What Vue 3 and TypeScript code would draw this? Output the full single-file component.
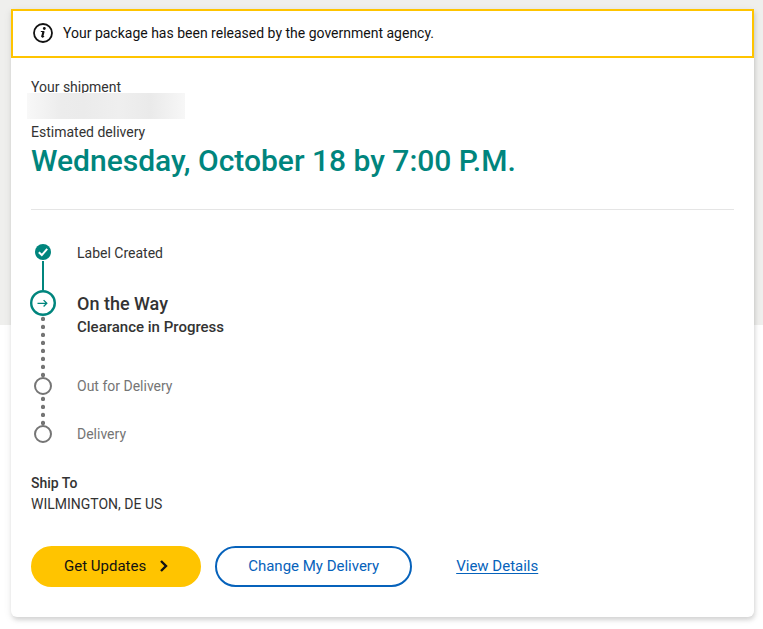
<script setup lang="ts">
type StepState = 'done' | 'current' | 'upcoming'

interface Step {
  label: string
  detail?: string
  state: StepState
}

const steps: Step[] = [
  { label: 'Label Created', state: 'done' },
  { label: 'On the Way', detail: 'Clearance in Progress', state: 'current' },
  { label: 'Out for Delivery', state: 'upcoming' },
  { label: 'Delivery', state: 'upcoming' },
]
</script>

<template>
  <main class="page">
    <article class="card">
      <div class="notice" role="status">
        <svg class="notice-icon" viewBox="0 0 20 20" aria-hidden="true">
          <circle cx="10" cy="10" r="9" fill="none" stroke="#121212" stroke-width="1.8" />
          <circle cx="11.3" cy="5.5" r="1.4" fill="#121212" />
          <path d="M7.8 8.5h2.7L9.2 13.6c-.1.8.8.6 1.9-.4" fill="none" stroke="#121212" stroke-width="1.1" />
          <path d="M10.6 8.2L9.1 14" fill="none" stroke="#121212" stroke-width="2.1" />
        </svg>
        <p>Your package has been released by the government agency.</p>
      </div>

      <div class="body">
        <header class="summary">
          <p>Your shipment</p>
          <div class="redacted"></div>
          <p>Estimated delivery</p>
          <h1>Wednesday, October 18 by 7:00 P.M.</h1>
        </header>

        <ol class="steps">
          <li v-for="step in steps" :key="step.label" class="step" :class="step.state">
            <div class="marker">
              <svg v-if="step.state === 'done'" width="16" height="16" viewBox="0 0 16 16" aria-hidden="true">
                <circle cx="8" cy="8" r="8" fill="#00857d" />
                <path d="M3.8 8.3l3 2.8 5.4-6.2" fill="none" stroke="#fff" stroke-width="2" />
              </svg>
              <svg v-else-if="step.state === 'current'" width="26" height="26" viewBox="0 0 26 26" aria-hidden="true">
                <circle cx="13" cy="13" r="11.8" fill="#fff" stroke="#00857d" stroke-width="2.4" />
                <path d="M7.5 13.3h9M13.6 10.1l3.2 3.2-3.2 3.2" fill="none" stroke="#00857d" stroke-width="1.3" />
              </svg>
              <svg v-else width="18" height="18" viewBox="0 0 18 18" aria-hidden="true">
                <circle cx="9" cy="9" r="8" fill="#fff" stroke="#757575" stroke-width="2" />
              </svg>
              <span class="connector"></span>
            </div>
            <div class="text">
              <p class="label">{{ step.label }}</p>
              <p v-if="step.detail" class="detail">{{ step.detail }}</p>
            </div>
          </li>
        </ol>

        <section class="ship-to">
          <h2>Ship To</h2>
          <p>WILMINGTON, DE US</p>
        </section>

        <div class="actions">
          <button type="button" class="button primary">
            Get Updates
            <svg width="8" height="12" viewBox="0 0 8 12" aria-hidden="true">
              <path d="M1 1l5 5-5 5" fill="none" stroke="#121212" stroke-width="2.4" />
            </svg>
          </button>
          <button type="button" class="button secondary">Change My Delivery</button>
          <a href="#" class="details">View Details</a>
        </div>
      </div>
    </article>
  </main>
</template>

<style>
body {
  margin: 0;
  background: #fff;
}
</style>

<style scoped>
.page {
  padding: 9px 9px 12px 11px;
  background: linear-gradient(#efefed, #efefed) top / 100% 325px no-repeat;
  color: #333;
  font-family: Roboto, "Liberation Sans", sans-serif;
  font-size: 14px;
  line-height: 18px;
}

p,
h1,
h2 {
  margin: 0;
}

.card {
  background: #fff;
  border-radius: 0 0 6px 6px;
  box-shadow: 1px 3px 4px rgba(0, 0, 0, 0.12), 0 2px 8px rgba(0, 0, 0, 0.08);
}

.notice {
  display: flex;
  align-items: center;
  gap: 10px;
  min-height: 43px;
  padding: 0 20px 2px;
  border: 2px solid #ffc400;
  color: #121212;
}

.notice-icon {
  flex: none;
  width: 20px;
  height: 20px;
}

.body {
  padding: 20px 20px 30px;
}

.summary {
  padding-bottom: 28px;
  border-bottom: 1px solid #e5e5e5;
}

.redacted {
  position: relative;
  width: 158px;
  height: 26px;
  margin: -3px 0 4px -4px;
  background: linear-gradient(90deg, #f8f8f8, #ececec 22%, #ebebeb 36%, #efefef 58%, #eaeaea 78%, #f7f7f7);
}

h1 {
  color: #00857d;
  font-size: 30px;
  font-weight: 500;
  line-height: 40px;
}

.steps {
  margin: 34px 0 0;
  padding: 0;
  list-style: none;
}

.step {
  display: flex;
  gap: 22px;
}

.step.done {
  min-height: 46px;
}

.step.current {
  min-height: 87px;
}

.step.upcoming {
  min-height: 48px;
  color: #757575;
}

.step:last-child {
  min-height: 18px;
}

.marker {
  display: flex;
  flex: none;
  flex-direction: column;
  align-items: center;
  width: 24px;
}

.marker svg {
  flex: none;
}

.connector {
  flex: 1;
  width: 4px;
  background: radial-gradient(circle at 2px 6px, #757575 1px, #757575 50%, transparent 50%) bottom / 4px 8px repeat-y;
  background-image: radial-gradient(circle 3px at 2px 6px, #757575 55%, transparent 90%);
}

.done .connector {
  width: 2px;
  margin-top: 1px;
  background: #00857d;
}

.current .text {
  padding-top: 2px;
}

.current .label {
  font-size: 18px;
  font-weight: 500;
  line-height: 24px;
}

.detail {
  font-size: 15px;
  font-weight: 500;
  line-height: 22px;
}

.ship-to {
  margin-top: 30px;
  line-height: 21px;
}

h2 {
  font-size: 14px;
  font-weight: 500;
}

.actions {
  display: flex;
  flex-wrap: wrap;
  align-items: center;
  gap: 14px;
  margin-top: 31px;
}

.button {
  display: inline-flex;
  align-items: center;
  gap: 14px;
  min-height: 41px;
  padding: 0 31px 2px;
  border: 2px solid #ffc400;
  border-radius: 21px;
  background: #ffc400;
  color: #121212;
  font: inherit;
  font-size: 15px;
  cursor: pointer;
}

.secondary {
  border-color: #0662bb;
  background: #fff;
  color: #0662bb;
}

.details {
  padding: 0 0 2px 30px;
  color: #0662bb;
  font-size: 15px;
  text-underline-offset: 2px;
}
</style>
